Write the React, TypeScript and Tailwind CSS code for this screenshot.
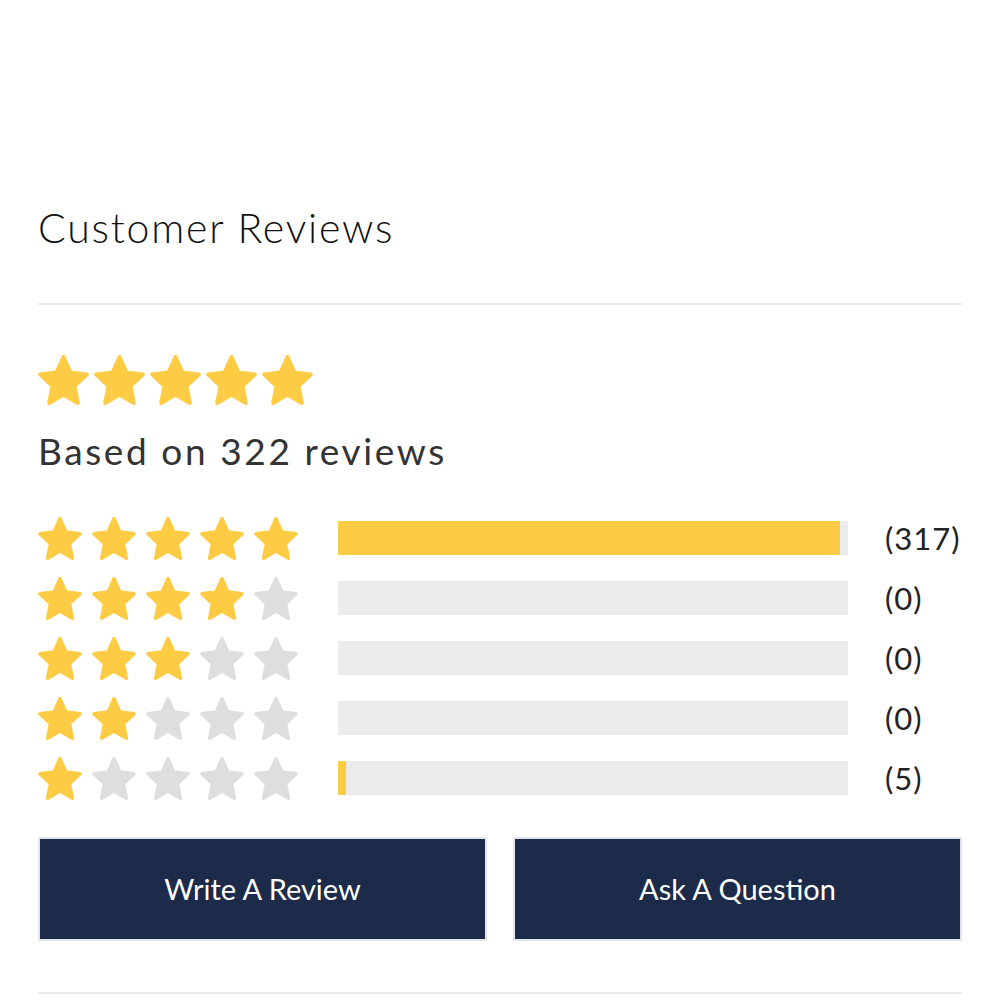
import React from 'react';

// rounded five-point star, trimmed viewBox so the glyph fills its box
const STAR_PATH =
  'M12 2.6l2.7 5.9 6.4.7-4.8 4.4 1.3 6.4L12 16.8 6.4 20l1.3-6.4L2.9 9.2l6.4-.7z';

const Star: React.FC<{ filled: boolean; w: number; h: number }> = ({ filled, w, h }) => (
  <svg width={w} height={h} viewBox="2 1.8 20 19" preserveAspectRatio="none" className="shrink-0">
    <path
      d={STAR_PATH}
      fill={filled ? '#fecb45' : '#dedede'}
      stroke={filled ? '#fecb45' : '#dedede'}
      strokeWidth={1.6}
      strokeLinejoin="round"
    />
  </svg>
);

const rows = [
  { stars: 5, count: 317 },
  { stars: 4, count: 0 },
  { stars: 3, count: 0 },
  { stars: 2, count: 0 },
  { stars: 1, count: 5 },
];

const total = 322;

export default function App() {
  return (
    <div
      className="w-[1000px] h-[1000px] bg-white px-[38px] pt-[200px] text-[#1a1a1a]"
      style={{ fontFamily: 'Lato, "Open Sans", sans-serif' }}
    >
      <h2 className="text-[41px] leading-[56px] font-light tracking-[1.8px] text-[#111]">
        Customer Reviews
      </h2>

      <div className="mt-[47px] h-[2px] bg-[#ebebeb]" />

      <div className="mt-[50px] flex gap-[5px]">
        {[0, 1, 2, 3, 4].map((i) => (
          <Star key={i} filled w={51} h={50} />
        ))}
      </div>

      <p className="mt-[24px] text-[37px] leading-[44px] text-[#333] tracking-[2.6px]">
        Based on {total} reviews
      </p>

      <div className="mt-[41px] flex flex-col gap-[12px]">
        {rows.map((row) => (
          <div key={row.stars} className="flex items-center h-[48px]">
            <div className="flex gap-[10px] w-[300px]">
              {[1, 2, 3, 4, 5].map((i) => (
                <Star key={i} filled={i <= row.stars} w={44} h={43} />
              ))}
            </div>
            <div className="w-[510px] h-[34px] bg-[#ebebeb]">
              <div
                className="h-full bg-[#fecb45]"
                style={{ width: `${(row.count / total) * 100}%` }}
              />
            </div>
            <span className="ml-[37px] text-[31px] tracking-[1px] text-[#222]">
              ({row.count})
            </span>
          </div>
        ))}
      </div>

      <div className="mt-[35px] flex gap-[26px]">
        <button className="flex-1 h-[104px] bg-[#1b2b49] border-2 border-[#e2e6ec] text-white text-[29px]">
          Write A Review
        </button>
        <button className="flex-1 h-[104px] bg-[#1b2b49] border-2 border-[#e2e6ec] text-white text-[29px]">
          Ask A Question
        </button>
      </div>

      <div className="mt-[51px] h-[2px] bg-[#ebebeb]" />
    </div>
  );
}
